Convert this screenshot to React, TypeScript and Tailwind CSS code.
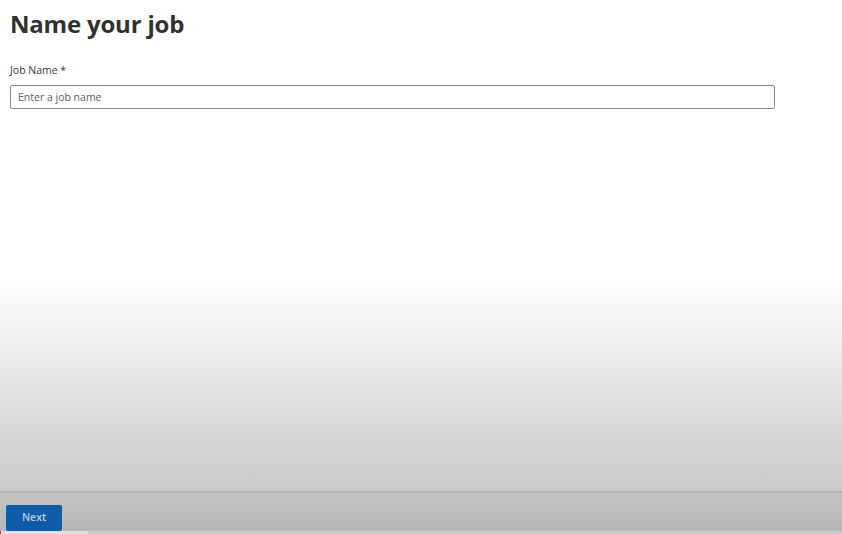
export default function App() {
  return (
    <div className="flex h-[534px] w-full flex-col bg-white font-['Open_Sans','Noto_Sans',sans-serif] text-[#323130]">
      <div className="flex flex-1 flex-col bg-[linear-gradient(to_bottom,#ffffff_0px,#ffffff_280px,#c9c9c9_491px)]">
        <div className="px-[10px] pt-[8px]">
          <h1 className="text-[24px] font-bold leading-[32px] tracking-[-0.2px]">Name your job</h1>
          <label className="mt-[23px] block text-[10.5px] font-medium leading-[14px] text-[#3b3a39]">Job Name *</label>
          <input
            type="text"
            placeholder="Enter a job name"
            className="mt-[8px] h-[24px] w-[765px] rounded-[2px] border border-[#8a8886] bg-white px-[7px] text-[10.5px] text-[#323130] outline-none placeholder:text-[#605e5c]"
          />
        </div>
      </div>
      <div className="h-[2px] bg-[#b9b9b9]" />
      <div className="flex h-[38px] items-start bg-[linear-gradient(to_bottom,#c3c3c3,#b8b8b8)] px-[6px] pt-[12px]">
        <button className="h-[26px] w-[56px] rounded-[2px] bg-[#0f5ca8] text-[10.5px] font-semibold text-[#b9cde2]">
          Next
        </button>
      </div>
      <div className="flex h-[3px] bg-[#c9c9c9]">
        <div className="w-[1px] bg-[#e0202a]" />
        <div className="w-[87px] bg-[#e2e2e2]" />
      </div>
    </div>
  );
}
